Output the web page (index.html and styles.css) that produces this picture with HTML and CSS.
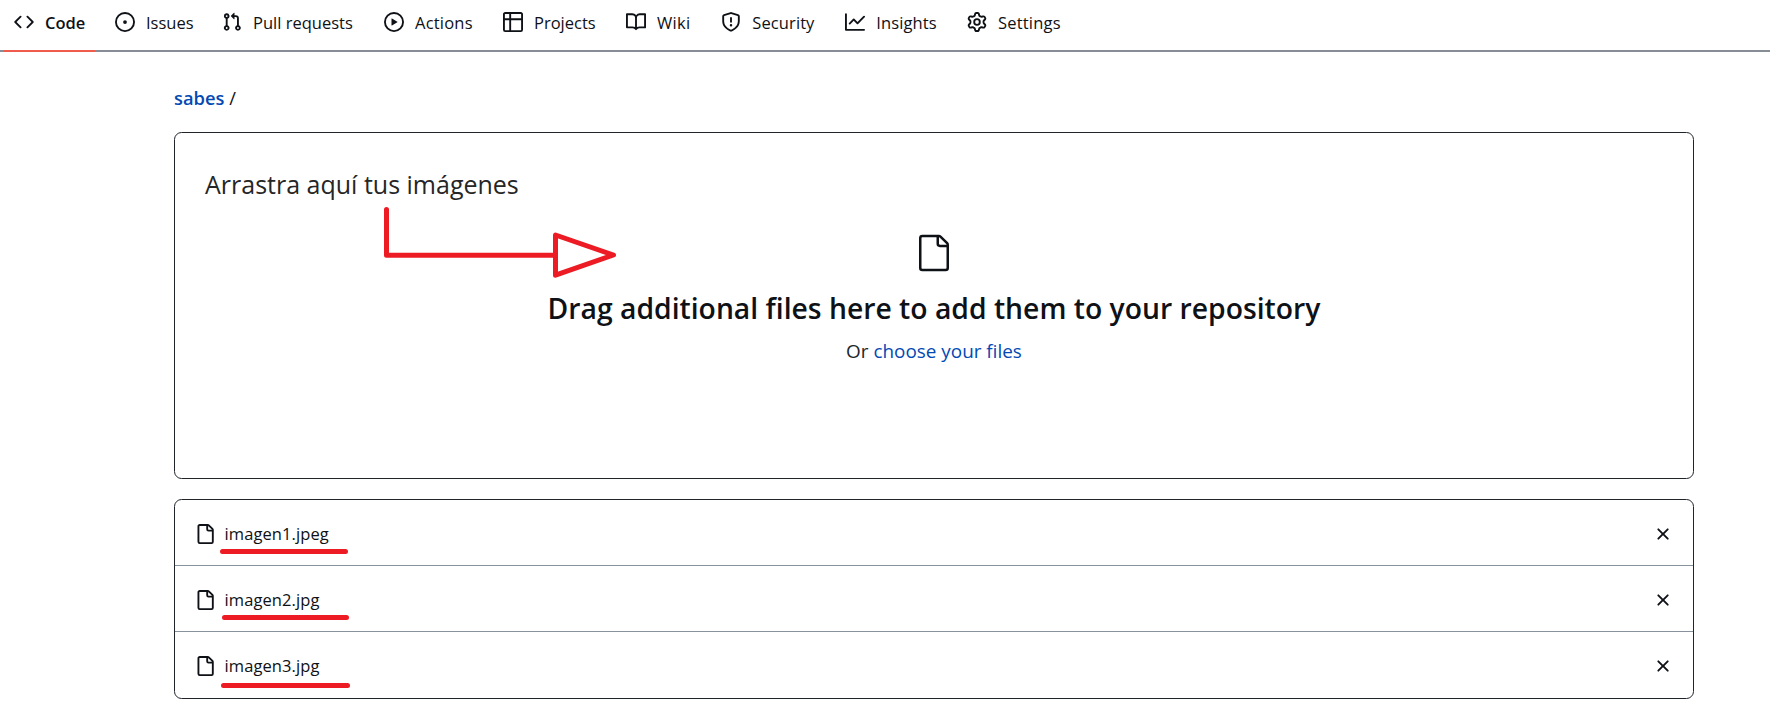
FILE: index.html
```html
<!DOCTYPE html>
<html lang="es">
<head>
<meta charset="utf-8">
<title>sabes</title>
<link rel="stylesheet" href="styles.css">
</head>
<body>
<nav class="tabs">
  <a class="tab active"><svg class="icon" viewBox="0 0 16 16"><path d="m11.28 3.22 4.25 4.25a.75.75 0 0 1 0 1.06l-4.25 4.25a.749.749 0 0 1-1.275-.326.749.749 0 0 1 .215-.734L13.94 8l-3.72-3.72a.749.749 0 0 1 .326-1.275.749.749 0 0 1 .734.215Zm-6.56 0a.751.751 0 0 1 1.042.018.751.751 0 0 1 .018 1.042L2.06 8l3.72 3.72a.749.749 0 0 1-.326 1.275.749.749 0 0 1-.734-.215L.47 8.53a.75.75 0 0 1 0-1.06Z"/></svg><span class="w-code">Code</span></a>
  <a class="tab"><svg class="icon" viewBox="0 0 16 16"><path d="M8 9.5a1.5 1.5 0 1 0 0-3 1.5 1.5 0 0 0 0 3Z"/><path d="M8 0a8 8 0 1 1 0 16A8 8 0 0 1 8 0ZM1.5 8a6.5 6.5 0 1 0 13 0 6.5 6.5 0 0 0-13 0Z"/></svg><span class="w-issues">Issues</span></a>
  <a class="tab"><svg class="icon" viewBox="0 0 16 16"><path d="M1.5 3.25a2.25 2.25 0 1 1 3 2.122v5.256a2.251 2.251 0 1 1-1.5 0V5.372A2.25 2.25 0 0 1 1.5 3.25Zm5.677-.177L9.573.677A.25.25 0 0 1 10 .854V2.5h1A2.5 2.5 0 0 1 13.5 5v5.628a2.251 2.251 0 1 1-1.5 0V5a1 1 0 0 0-1-1h-1v1.646a.25.25 0 0 1-.427.177L7.177 3.427a.25.25 0 0 1 0-.354ZM3.75 2.5a.75.75 0 1 0 0 1.5.75.75 0 0 0 0-1.5Zm0 9.5a.75.75 0 1 0 0 1.5.75.75 0 0 0 0-1.5Zm8.25.75a.75.75 0 1 0 1.5 0 .75.75 0 0 0-1.5 0Z"/></svg><span class="w-pulls">Pull requests</span></a>
  <a class="tab"><svg class="icon" viewBox="0 0 16 16"><path d="M8 0a8 8 0 1 1 0 16A8 8 0 0 1 8 0ZM1.5 8a6.5 6.5 0 1 0 13 0 6.5 6.5 0 0 0-13 0Zm4.879-2.773 4.264 2.559a.25.25 0 0 1 0 .428l-4.264 2.559A.25.25 0 0 1 6 10.559V5.442a.25.25 0 0 1 .379-.215Z"/></svg><span class="w-actions">Actions</span></a>
  <a class="tab"><svg class="icon" viewBox="0 0 16 16"><path d="M0 1.75C0 .784.784 0 1.75 0h12.5C15.216 0 16 .784 16 1.75v12.5A1.75 1.75 0 0 1 14.25 16H1.75A1.75 1.75 0 0 1 0 14.25ZM6.5 6.5v8h7.75a.25.25 0 0 0 .25-.25V6.5Zm8-1.5V1.75a.25.25 0 0 0-.25-.25H6.5V5Zm-13 1.5v7.75c0 .138.112.25.25.25H5v-8ZM5 5V1.5H1.75a.25.25 0 0 0-.25.25V5Z"/></svg><span class="w-projects">Projects</span></a>
  <a class="tab"><svg class="icon" viewBox="0 0 16 16"><path d="M0 1.75A.75.75 0 0 1 .75 1h4.253c1.227 0 2.317.59 3 1.501A3.743 3.743 0 0 1 11.006 1h4.245a.75.75 0 0 1 .75.75v10.5a.75.75 0 0 1-.75.75h-4.507a2.25 2.25 0 0 0-1.591.659l-.622.621a.75.75 0 0 1-1.06 0l-.622-.621A2.25 2.25 0 0 0 5.258 13H.75a.75.75 0 0 1-.75-.75Zm7.251 10.324.004-5.073-.002-2.253A2.25 2.25 0 0 0 5.003 2.5H1.5v9h3.757a3.75 3.75 0 0 1 1.994.574ZM8.755 4.75l-.004 7.322a3.752 3.752 0 0 1 1.992-.572H14.5v-9h-3.495a2.25 2.25 0 0 0-2.25 2.25Z"/></svg><span class="w-wiki">Wiki</span></a>
  <a class="tab"><svg class="icon" viewBox="0 0 16 16"><path d="M7.467.133a1.748 1.748 0 0 1 1.066 0l5.25 1.68A1.75 1.75 0 0 1 15 3.48V7c0 1.566-.32 3.182-1.303 4.682-.983 1.498-2.585 2.813-5.032 3.855a1.697 1.697 0 0 1-1.33 0c-2.447-1.042-4.049-2.357-5.032-3.855C1.32 10.182 1 8.566 1 7V3.48a1.75 1.75 0 0 1 1.217-1.667Zm.61 1.429a.25.25 0 0 0-.153 0l-5.25 1.68a.25.25 0 0 0-.174.238V7c0 1.358.275 2.666 1.057 3.86.784 1.194 2.121 2.34 4.366 3.297a.196.196 0 0 0 .154 0c2.245-.956 3.582-2.104 4.366-3.298C13.225 9.666 13.5 8.36 13.5 7V3.48a.251.251 0 0 0-.174-.237l-5.25-1.68ZM8.75 4.75v3a.75.75 0 0 1-1.5 0v-3a.75.75 0 0 1 1.5 0ZM9 10.5a1 1 0 1 1-2 0 1 1 0 0 1 2 0Z"/></svg><span class="w-security">Security</span></a>
  <a class="tab"><svg class="icon" viewBox="0 0 16 16"><path d="M1.5 1.75V13.5h13.75a.75.75 0 0 1 0 1.5H.75a.75.75 0 0 1-.75-.75V1.75a.75.75 0 0 1 1.5 0Zm14.28 2.53-5.25 5.25a.75.75 0 0 1-1.06 0L7 7.06 4.28 9.78a.751.751 0 0 1-1.042-.018.751.751 0 0 1-.018-1.042l3.25-3.25a.75.75 0 0 1 1.06 0L10 7.94l4.72-4.72a.751.751 0 0 1 1.042.018.751.751 0 0 1 .018 1.042Z"/></svg><span class="w-insights">Insights</span></a>
  <a class="tab"><svg class="icon" viewBox="0 0 16 16"><path d="M8 0a8.2 8.2 0 0 1 .701.031C9.444.095 9.99.645 10.16 1.29l.288 1.107c.018.066.079.158.212.224.231.114.454.243.668.386.123.082.233.09.299.071l1.103-.303c.644-.176 1.392.021 1.82.63.27.385.506.792.704 1.218.315.675.111 1.422-.364 1.891l-.814.806c-.049.048-.098.147-.088.294.016.257.016.515 0 .772-.01.147.038.246.088.294l.814.806c.475.469.679 1.216.364 1.891a7.977 7.977 0 0 1-.704 1.217c-.428.61-1.176.807-1.82.63l-1.102-.302c-.067-.019-.177-.011-.3.071a5.909 5.909 0 0 1-.668.386c-.133.066-.194.158-.211.224l-.29 1.106c-.168.646-.715 1.196-1.458 1.26a8.006 8.006 0 0 1-1.402 0c-.743-.064-1.289-.614-1.458-1.26l-.289-1.106c-.018-.066-.079-.158-.212-.224a5.738 5.738 0 0 1-.668-.386c-.123-.082-.233-.09-.299-.071l-1.103.303c-.644.176-1.392-.021-1.82-.63a8.12 8.12 0 0 1-.704-1.218c-.315-.675-.111-1.422.363-1.891l.815-.806c.05-.048.098-.147.088-.294a6.214 6.214 0 0 1 0-.772c.01-.147-.038-.246-.088-.294l-.815-.806C.635 6.045.431 5.298.746 4.623a7.92 7.92 0 0 1 .704-1.217c.428-.61 1.176-.807 1.82-.63l1.102.302c.067.019.177.011.3-.071.214-.143.437-.272.668-.386.133-.066.194-.158.211-.224l.29-1.106C6.009.645 6.556.095 7.299.03 7.53.01 7.764 0 8 0Zm-.571 1.525c-.036.003-.108.036-.137.146l-.289 1.105c-.147.561-.549.967-.998 1.189-.173.086-.34.183-.5.29-.417.278-.97.423-1.529.27l-1.103-.303c-.109-.03-.175.016-.195.045-.22.312-.412.644-.573.99-.014.031-.021.11.059.19l.815.806c.411.406.562.957.53 1.456a4.709 4.709 0 0 0 0 .582c.032.499-.119 1.05-.53 1.456l-.815.806c-.081.08-.073.159-.059.19.162.346.353.677.573.989.02.03.085.076.195.046l1.102-.303c.56-.153 1.113-.008 1.53.27.161.107.328.204.501.29.447.222.85.629.997 1.189l.289 1.105c.029.109.101.143.137.146a6.6 6.6 0 0 0 1.142 0c.036-.003.108-.036.137-.146l.289-1.105c.147-.561.549-.967.998-1.189.173-.086.34-.183.5-.29.417-.278.97-.423 1.529-.27l1.103.303c.109.029.175-.016.195-.045.22-.313.411-.644.573-.99.014-.031.021-.11-.059-.19l-.815-.806c-.411-.406-.562-.957-.53-1.456a4.709 4.709 0 0 0 0-.582c-.032-.499.119-1.05.53-1.456l.815-.806c.081-.08.073-.159.059-.19a6.464 6.464 0 0 0-.573-.989c-.02-.03-.085-.076-.195-.046l-1.102.303c-.56.153-1.113.008-1.53-.27a4.44 4.44 0 0 0-.501-.29c-.447-.222-.85-.629-.997-1.189l-.289-1.105c-.029-.11-.101-.143-.137-.146a6.6 6.6 0 0 0-1.142 0ZM11 8a3 3 0 1 1-6 0 3 3 0 0 1 6 0ZM9.5 8a1.5 1.5 0 1 0-3.001.001A1.5 1.5 0 0 0 9.5 8Z"/></svg><span class="w-settings">Settings</span></a>
</nav>

<main class="content">
  <div class="breadcrumb"><a class="repo">sabes</a><span>/</span></div>

  <section class="dropzone">
    <p class="note">Arrastra aquí tus imágenes</p>
    <svg class="file-large" viewBox="0 0 24 24"><path d="M3 3a2 2 0 0 1 2-2h9.982a2 2 0 0 1 1.414.586l4.018 4.018A2 2 0 0 1 21 7.018V21a2 2 0 0 1-2 2H5a2 2 0 0 1-2-2V3Zm2-.5a.5.5 0 0 0-.5.5v18a.5.5 0 0 0 .5.5h14a.5.5 0 0 0 .5-.5V8.5h-4a2 2 0 0 1-2-2v-4Zm10 0v4a.5.5 0 0 0 .5.5h4a.5.5 0 0 0-.146-.336l-4.018-4.018A.5.5 0 0 0 15 2.5Z"/></svg>
    <h2 class="title">Drag additional files here to add them to your repository</h2>
    <p class="choose">Or <a>choose your files</a></p>
  </section>

  <ul class="files">
    <li class="file"><svg class="icon" viewBox="0 0 16 16"><path d="M2 1.75C2 .784 2.784 0 3.75 0h6.586c.464 0 .909.184 1.237.513l2.914 2.914c.329.328.513.773.513 1.237v9.586A1.75 1.75 0 0 1 13.25 16h-9.5A1.75 1.75 0 0 1 2 14.25Zm1.75-.25a.25.25 0 0 0-.25.25v12.5c0 .138.112.25.25.25h9.5a.25.25 0 0 0 .25-.25V6h-2.75A1.75 1.75 0 0 1 9 4.25V1.5Zm6.75.062V4.25c0 .138.112.25.25.25h2.688l-.011-.013-2.914-2.914-.013-.011Z"/></svg><span class="name">imagen1.jpeg</span><svg class="icon" viewBox="0 0 16 16"><path d="M3.72 3.72a.75.75 0 0 1 1.06 0L8 6.94l3.22-3.22a.749.749 0 0 1 1.275.326.749.749 0 0 1-.215.734L9.06 8l3.22 3.22a.749.749 0 0 1-.326 1.275.749.749 0 0 1-.734-.215L8 9.06l-3.22 3.22a.751.751 0 0 1-1.042-.018.751.751 0 0 1-.018-1.042L6.94 8 3.72 4.78a.75.75 0 0 1 0-1.06Z"/></svg></li>
    <li class="file"><svg class="icon" viewBox="0 0 16 16"><path d="M2 1.75C2 .784 2.784 0 3.75 0h6.586c.464 0 .909.184 1.237.513l2.914 2.914c.329.328.513.773.513 1.237v9.586A1.75 1.75 0 0 1 13.25 16h-9.5A1.75 1.75 0 0 1 2 14.25Zm1.75-.25a.25.25 0 0 0-.25.25v12.5c0 .138.112.25.25.25h9.5a.25.25 0 0 0 .25-.25V6h-2.75A1.75 1.75 0 0 1 9 4.25V1.5Zm6.75.062V4.25c0 .138.112.25.25.25h2.688l-.011-.013-2.914-2.914-.013-.011Z"/></svg><span class="name">imagen2.jpg</span><svg class="icon" viewBox="0 0 16 16"><path d="M3.72 3.72a.75.75 0 0 1 1.06 0L8 6.94l3.22-3.22a.749.749 0 0 1 1.275.326.749.749 0 0 1-.215.734L9.06 8l3.22 3.22a.749.749 0 0 1-.326 1.275.749.749 0 0 1-.734-.215L8 9.06l-3.22 3.22a.751.751 0 0 1-1.042-.018.751.751 0 0 1-.018-1.042L6.94 8 3.72 4.78a.75.75 0 0 1 0-1.06Z"/></svg></li>
    <li class="file"><svg class="icon" viewBox="0 0 16 16"><path d="M2 1.75C2 .784 2.784 0 3.75 0h6.586c.464 0 .909.184 1.237.513l2.914 2.914c.329.328.513.773.513 1.237v9.586A1.75 1.75 0 0 1 13.25 16h-9.5A1.75 1.75 0 0 1 2 14.25Zm1.75-.25a.25.25 0 0 0-.25.25v12.5c0 .138.112.25.25.25h9.5a.25.25 0 0 0 .25-.25V6h-2.75A1.75 1.75 0 0 1 9 4.25V1.5Zm6.75.062V4.25c0 .138.112.25.25.25h2.688l-.011-.013-2.914-2.914-.013-.011Z"/></svg><span class="name">imagen3.jpg</span><svg class="icon" viewBox="0 0 16 16"><path d="M3.72 3.72a.75.75 0 0 1 1.06 0L8 6.94l3.22-3.22a.749.749 0 0 1 1.275.326.749.749 0 0 1-.215.734L9.06 8l3.22 3.22a.749.749 0 0 1-.326 1.275.749.749 0 0 1-.734-.215L8 9.06l-3.22 3.22a.751.751 0 0 1-1.042-.018.751.751 0 0 1-.018-1.042L6.94 8 3.72 4.78a.75.75 0 0 1 0-1.06Z"/></svg></li>
  </ul>
</main>

<!-- Hand-drawn marks over the page: arrow and file name underlines -->
<svg class="marks" viewBox="0 0 1770 716">
  <path d="M386.5 209.5V255.2H555.5M555.5 235V275.2L613.5 255Z"/>
  <path d="M222.5 551.5H345.5M224.5 617.5H346.5M223.5 685.5H347.5"/>
</svg>
</body>
</html>
```

FILE: styles.css
```css
* { box-sizing: border-box; }

body {
  margin: 0;
  position: relative;
  height: 716px;
  overflow: hidden;
  background: #fff;
  color: #0e1116;
  font-family: "Open Sans", "Noto Sans", sans-serif;
  font-size: 16.5px;
}

p, h2, ul { margin: 0; padding: 0; }

.icon {
  flex: none;
  width: 20px;
  height: 20px;
  fill: #0e1116;
}

/* Tab bar */
.tabs {
  display: flex;
  gap: 10px;
  height: 52px;
  padding-left: 4px;
  border-bottom: 2px solid #868d95;
}

.tab {
  display: flex;
  gap: 11px;
  height: 52px;
  padding: 12px 10px 0;
  line-height: 21px;
  white-space: nowrap;
}

.active {
  font-weight: 600;
  border-bottom: 2px solid #ef5b4c;
}

.w-code { width: 40px; }
.w-issues { width: 46px; }
.w-pulls { width: 101px; }
.w-actions { width: 58px; letter-spacing: .2px; }
.w-projects { width: 62px; }
.w-wiki { width: 34.3px; letter-spacing: .3px; }
.w-security { width: 63px; letter-spacing: .1px; }
.w-insights { width: 60.7px; letter-spacing: .1px; }
.w-settings { width: 64.5px; letter-spacing: .2px; }

/* Page content */
.content {
  width: 1520px;
  margin-left: 174px;
  padding-top: 33px;
}

.breadcrumb {
  display: flex;
  gap: 5px;
  height: 47px;
  font-size: 18.3px;
  line-height: 26px;
}

.repo {
  color: #0349b4;
  font-weight: 600;
}

.dropzone {
  display: flex;
  flex-direction: column;
  align-items: center;
  height: 347px;
  border: 1px solid #20252c;
  border-radius: 7.5px;
}

.note {
  align-self: flex-start;
  margin: 32px 0 0 30px;
  color: #262626;
  font-size: 25px;
  line-height: 38px;
}

.file-large {
  width: 40px;
  height: 40px;
  margin-top: 30px;
  fill: #0e1116;
}

.title {
  margin-top: 13px;
  font-size: 28.3px;
  font-weight: 600;
  line-height: 44px;
}

.choose {
  margin-top: 8px;
  color: #20252c;
  font-size: 18.9px;
  line-height: 26px;
}

.choose a { color: #0349b4; }

.files {
  margin-top: 20px;
  list-style: none;
  border: 1px solid #20252c;
  border-radius: 7.5px;
}

.file {
  display: flex;
  gap: 9.5px;
  height: 66px;
  padding: 24px 20px 0;
  line-height: 20px;
  border-bottom: 1px solid #88929d;
}

.file:last-child { border-bottom: 0; }

.name {
  flex: 1;
  letter-spacing: .1px;
}

/* Red marks */
.marks {
  position: absolute;
  top: 0;
  left: 0;
  width: 1770px;
  height: 716px;
  fill: none;
  stroke: #ed1c24;
  stroke-width: 5;
  stroke-linecap: round;
  stroke-linejoin: round;
  pointer-events: none;
}
```
